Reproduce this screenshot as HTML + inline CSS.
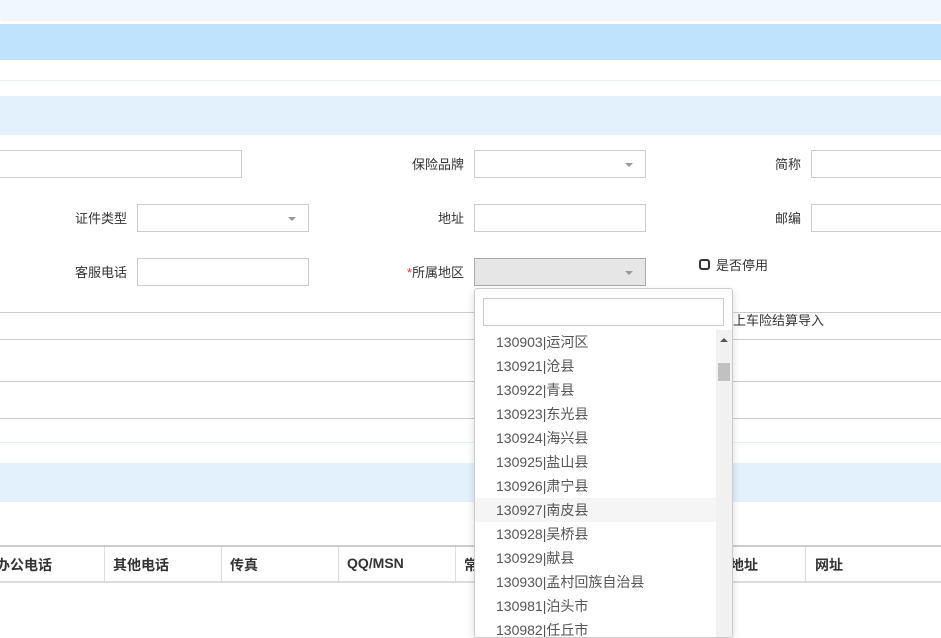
<!DOCTYPE html>
<html><head><meta charset="utf-8"><style>
*{margin:0;padding:0;box-sizing:border-box}
body{width:941px;height:633px;overflow:hidden;background:#fff;position:relative;font-family:"Liberation Sans","Noto Sans CJK SC",sans-serif;font-size:13px;color:#333}
.a{position:absolute}
.inp{position:absolute;border:1px solid #ccc;background:#fff;height:28px}
.lbl{position:absolute;text-align:right;width:120px;line-height:16px}
.caret{position:absolute;right:12px;top:12px;width:0;height:0;border-left:4px solid transparent;border-right:4px solid transparent;border-top:4px solid #999}
.hl{position:absolute;left:0;width:941px;height:1px;background:#ccc}
.th{position:absolute;top:555px;font-weight:bold;font-size:14px;color:#333}
.vd{position:absolute;top:547px;width:1px;height:35px;background:#ddd}
.it{position:absolute;left:21px;font-size:14px;color:#555;line-height:24px}
</style></head><body>
<div class="a" style="left:0;top:0;width:941px;height:19px;background:#f0f7fe;box-shadow:0 2px 3px rgba(0,0,0,.06)"></div>
<div class="a" style="left:0;top:24px;width:941px;height:36px;background:#bfe2fd"></div>
<div class="a" style="left:0;top:80px;width:941px;height:1px;background:#e3f1fd"></div>
<div class="a" style="left:0;top:96px;width:941px;height:39px;background:#e3f1fd"></div>

<div class="inp" style="left:-2px;top:150px;width:244px"></div>
<div class="lbl" style="left:344px;top:157px">保险品牌</div>
<div class="inp" style="left:474px;top:150px;width:172px"><div class="caret"></div></div>
<div class="lbl" style="left:681px;top:157px">简称</div>
<div class="inp" style="left:811px;top:150px;width:140px"></div>

<div class="lbl" style="left:7px;top:211px">证件类型</div>
<div class="inp" style="left:137px;top:204px;width:172px"><div class="caret"></div></div>
<div class="lbl" style="left:344px;top:211px">地址</div>
<div class="inp" style="left:474px;top:204px;width:172px"></div>
<div class="lbl" style="left:681px;top:211px">邮编</div>
<div class="inp" style="left:811px;top:204px;width:140px"></div>

<div class="lbl" style="left:7px;top:265px">客服电话</div>
<div class="inp" style="left:137px;top:258px;width:172px"></div>
<div class="lbl" style="left:344px;top:265px"><span style="color:#e33">*</span>所属地区</div>
<div class="inp" style="left:474px;top:258px;width:172px;background:#e6e6e6;border-color:#aaa"><div class="caret"></div></div>
<div class="a" style="left:699px;top:259px;width:11px;height:11px;border:2px solid #333;border-radius:3px"></div>
<div class="a" style="left:716px;top:258px;line-height:16px">是否停用</div>

<div class="hl" style="top:312px"></div>
<div class="a" style="left:733px;top:313px;line-height:16px">上车险结算导入</div>
<div class="hl" style="top:339px"></div>
<div class="hl" style="top:381px"></div>
<div class="hl" style="top:418px"></div>
<div class="a" style="left:0;top:442px;width:941px;height:1px;background:#e3f1fd"></div>
<div class="a" style="left:0;top:463px;width:941px;height:39px;background:#e3f1fd"></div>

<div class="a" style="left:0;top:545px;width:941px;height:2px;background:#ccc"></div>
<div class="a" style="left:0;top:581px;width:941px;height:2px;background:#ddd"></div>
<div class="vd" style="left:104px"></div><div class="vd" style="left:221px"></div><div class="vd" style="left:338px"></div><div class="vd" style="left:455px"></div><div class="vd" style="left:805px"></div>
<div class="th" style="left:-4px">办公电话</div>
<div class="th" style="left:113px">其他电话</div>
<div class="th" style="left:230px">传真</div>
<div class="th" style="left:347px">QQ/MSN</div>
<div class="th" style="left:464px">常</div>
<div class="th" style="left:730px">地址</div>
<div class="th" style="left:815px">网址</div>

<div class="a" style="left:474px;top:288px;width:259px;height:350px;background:#fff;border:1px solid #ccc;border-radius:3px;box-shadow:0 3px 8px rgba(0,0,0,.15);overflow:hidden">
<div class="a" style="left:8px;top:9px;width:241px;height:28px;border:1px solid #ccc"></div>
<div class="a" style="left:0;top:209px;width:241px;height:24px;background:#f5f5f5"></div>
<div class="a" style="left:241px;top:41px;width:17px;height:310px;background:#f1f1f1"></div>
<div class="a" style="left:245px;top:49px;width:0;height:0;border-left:4px solid transparent;border-right:4px solid transparent;border-bottom:4px solid #555"></div>
<div class="a" style="left:243px;top:74px;width:12px;height:18px;background:#c1c1c1"></div>
<div class="it" style="top:41px">130903|运河区</div>
<div class="it" style="top:65px">130921|沧县</div>
<div class="it" style="top:89px">130922|青县</div>
<div class="it" style="top:113px">130923|东光县</div>
<div class="it" style="top:137px">130924|海兴县</div>
<div class="it" style="top:161px">130925|盐山县</div>
<div class="it" style="top:185px">130926|肃宁县</div>
<div class="it" style="top:209px">130927|南皮县</div>
<div class="it" style="top:233px">130928|吴桥县</div>
<div class="it" style="top:257px">130929|献县</div>
<div class="it" style="top:281px">130930|孟村回族自治县</div>
<div class="it" style="top:305px">130981|泊头市</div>
<div class="it" style="top:329px">130982|任丘市</div>
</div>
</body></html>
